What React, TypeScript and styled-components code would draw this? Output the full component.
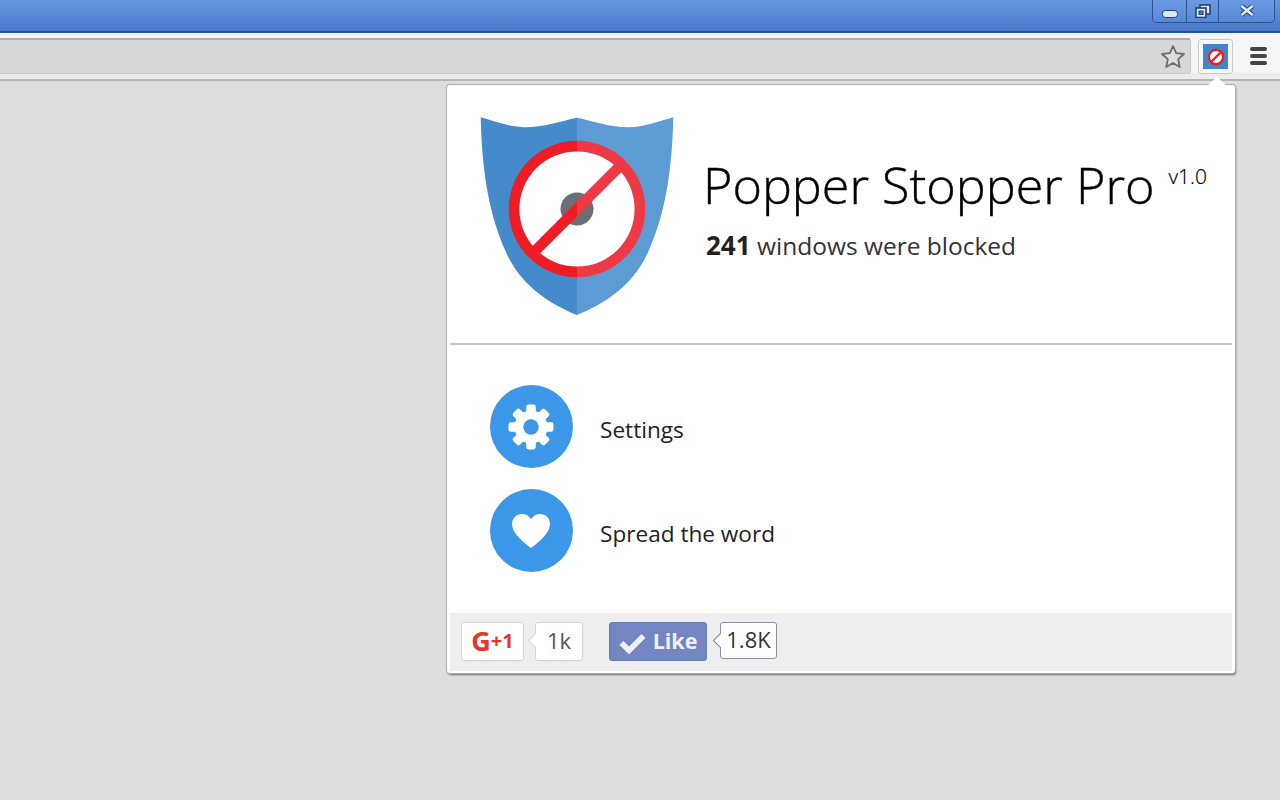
import React from 'react';
import styled, { createGlobalStyle } from 'styled-components';

const GlobalStyle = createGlobalStyle`
  html, body {
    margin: 0;
    padding: 0;
    background: #dedede;
    overflow: hidden;
  }
  body {
    font-family: 'Open Sans', sans-serif;
  }
`;

function ShieldLogo() {
  return (
    <svg width="200" height="204" viewBox="478 114 200 204">
      <path
        d="M480.7 117.3C497 122 511 127.3 525 127.3C544 127.3 561 121 577 117.7V315C548 303 520 285 505 250C490 216 482 175 480.7 117.3Z"
        fill="#458bcb"
      />
      <path
        d="M673.3 117.3C657 122 643 127.3 629 127.3C610 127.3 593 121 577 117.7V315C606 303 634 285 649 250C664 216 672 175 673.3 117.3Z"
        fill="#5c9bd4"
      />
      <circle cx="577" cy="209" r="63" fill="#fff" />
      <circle cx="577" cy="209" r="16.5" fill="#687073" />
      <path d="M577 140.7A68.3 68.3 0 0 0 577 277.3V266.6A57.6 57.6 0 0 1 577 151.4Z" fill="#ee1c25" />
      <path d="M577 140.7A68.3 68.3 0 0 1 577 277.3V266.6A57.6 57.6 0 0 0 577 151.4Z" fill="#ef3a45" />
      <path d="M577 201.5L533 245.5L533 260.5L577 216.5Z" fill="#ee1c25" />
      <path d="M577 201.5L621 157.5L621 172.5L577 216.5Z" fill="#ef3a45" />
    </svg>
  );
}

function BanIcon() {
  return (
    <svg width="18" height="18" viewBox="0 0 18 18">
      <circle cx="9" cy="9" r="7.2" fill="#fff" stroke="#ee1c25" strokeWidth="2.4" />
      <path d="M4.5 13.5L13.5 4.5" stroke="#ee1c25" strokeWidth="2.4" />
    </svg>
  );
}

function GearIcon() {
  const teeth = [0, 45, 90, 135, 180, 225, 270, 315];
  return (
    <svg width="46" height="46" viewBox="-23 -23 46 46">
      {teeth.map((a) => (
        <rect key={a} x="-4.8" y="-22.5" width="9.6" height="12" rx="2.4" fill="#fff" transform={`rotate(${a})`} />
      ))}
      <circle r="16.5" fill="#fff" />
      <circle r="7.7" fill="#3d97e8" />
    </svg>
  );
}

function HeartIcon() {
  return (
    <svg width="40" height="36" viewBox="0 0 42 38">
      <path
        d="M21 37C14 31 1 22 1 11.5C1 5 6 1 11.5 1C15.5 1 19 3 21 6.5C23 3 26.5 1 30.5 1C36 1 41 5 41 11.5C41 22 28 31 21 37Z"
        fill="#fff"
      />
    </svg>
  );
}

function StarIcon() {
  return (
    <svg width="26" height="25" viewBox="0 0 26 25">
      <path
        d="M13 2L16.2 9.2L24 10L18.2 15.2L19.8 23L13 19L6.2 23L7.8 15.2L2 10L9.8 9.2Z"
        fill="#dedede"
        stroke="#6f6f6f"
        strokeWidth="1.8"
        strokeLinejoin="round"
      />
    </svg>
  );
}

export default function App() {
  return (
    <Page>
      <GlobalStyle />
      <TitleBar>
        <WindowControls>
          <MinButton>
            <svg width="16" height="8" viewBox="0 0 16 8">
              <rect x="0.5" y="0.5" width="15" height="7" rx="3" fill="#dfe8f5" stroke="#23406f" />
            </svg>
          </MinButton>
          <RestoreButton>
            <svg width="16" height="14" viewBox="0 0 16 14">
              <rect x="5" y="1" width="10" height="9" fill="#dfe8f5" stroke="#23406f" strokeWidth="1.6" />
              <rect x="1" y="4" width="10" height="9.5" fill="#dfe8f5" stroke="#23406f" strokeWidth="1.6" />
              <rect x="4" y="7" width="4" height="3.5" fill="#4b79c4" stroke="#23406f" />
            </svg>
          </RestoreButton>
          <CloseButton>
            <svg width="16" height="13" viewBox="0 0 16 13">
              <path d="M2.5 2L13.5 11M13.5 2L2.5 11" stroke="#23406f" strokeWidth="4.6" />
              <path d="M2.5 2L13.5 11M13.5 2L2.5 11" stroke="#e6edf8" strokeWidth="2.6" />
            </svg>
          </CloseButton>
        </WindowControls>
      </TitleBar>
      <Toolbar>
        <Omnibox>
          <StarIcon />
        </Omnibox>
        <ExtensionButton>
          <ExtensionIcon>
            <BanIcon />
          </ExtensionIcon>
        </ExtensionButton>
        <MenuButton>
          <MenuBar />
          <MenuBar />
          <MenuBar />
        </MenuButton>
      </Toolbar>
      <ToolbarEdge />
      <Popup>
        <Caret />
        <Header>
          <ShieldLogo />
          <HeaderText>
            <TitleRow>
              <Title>Popper Stopper Pro</Title>
              <Version>v1.0</Version>
            </TitleRow>
            <Blocked>
              <b>241</b> windows were blocked
            </Blocked>
          </HeaderText>
        </Header>
        <Divider />
        <Menu>
          <MenuRow>
            <RoundIcon>
              <GearIcon />
            </RoundIcon>
            <MenuLabel>Settings</MenuLabel>
          </MenuRow>
          <MenuRow>
            <RoundIcon>
              <HeartIcon />
            </RoundIcon>
            <MenuLabel>Spread the word</MenuLabel>
          </MenuRow>
        </Menu>
        <Footer>
          <PlusButton>
            <PlusG>G</PlusG>
            <PlusOne>+1</PlusOne>
          </PlusButton>
          <CountBubble>1k</CountBubble>
          <LikeButton>
            <LikeCheck width="27" height="22" viewBox="0 0 27 22">
              <path d="M2.5 11L10 18.5L24.5 4" fill="none" stroke="#eef0f8" strokeWidth="5.5" />
            </LikeCheck>
            <span>Like</span>
          </LikeButton>
          <LikeCount>1.8K</LikeCount>
        </Footer>
      </Popup>
    </Page>
  );
}

const Page = styled.div`
  position: relative;
  width: 1280px;
  height: 800px;
  background: #dedede;
  overflow: hidden;
`;

const TitleBar = styled.div`
  height: 31px;
  display: flex;
  justify-content: flex-end;
  padding-right: 5px;
  background: linear-gradient(#6496e0, #4a79c9);
  border-bottom: 2px solid #23509f;
`;

const WindowControls = styled.div`
  display: flex;
  height: 22px;
  border: 1px solid #2c528f;
  border-top: none;
  border-radius: 0 0 5px 5px;
  overflow: hidden;
`;

const ControlButton = styled.div`
  display: flex;
  justify-content: center;
  background: linear-gradient(#6a9be2, #5688d6);
`;

const MinButton = styled(ControlButton)`
  width: 34px;
  padding-top: 10px;
  box-sizing: border-box;
  border-right: 1px solid #2c528f;
`;

const RestoreButton = styled(ControlButton)`
  width: 32px;
  padding-top: 4px;
  box-sizing: border-box;
  border-right: 1px solid #2c528f;
`;

const CloseButton = styled(ControlButton)`
  width: 55px;
  padding-top: 4px;
  box-sizing: border-box;
`;

const Toolbar = styled.div`
  height: 35px;
  padding-top: 5px;
  display: flex;
  align-items: flex-start;
  background: #f5f5f5;
`;

const Omnibox = styled.div`
  width: 1191px;
  height: 36px;
  display: flex;
  align-items: center;
  justify-content: flex-end;
  padding-right: 4px;
  box-sizing: border-box;
  background: #d8d8d8;
  border-top: 2px solid #b0b0b0;
  border-right: 1px solid #c8c8c8;
  border-bottom: 1px solid #c8c8c8;
  border-radius: 0 3px 3px 0;
`;

const ExtensionButton = styled.div`
  width: 35px;
  height: 35px;
  margin: 1px 0 0 7px;
  box-sizing: border-box;
  display: flex;
  align-items: center;
  justify-content: center;
  background: #f8f8f8;
  border: 1px solid #c9c9c9;
  border-radius: 3px;
`;

const ExtensionIcon = styled.div`
  width: 25px;
  height: 25px;
  display: flex;
  align-items: center;
  justify-content: center;
  background: #3f86cc;
`;

const MenuButton = styled.div`
  display: flex;
  flex-direction: column;
  gap: 3px;
  margin: 9px 0 0 17px;
`;

const MenuBar = styled.div`
  width: 17px;
  height: 4px;
  border-radius: 2px;
  background: #444;
`;

const ToolbarEdge = styled.div`
  height: 6px;
  background: #ececec;
  border-bottom: 2px solid #b4b6b8;
`;

const Popup = styled.div`
  position: absolute;
  left: 447px;
  top: 85px;
  width: 788px;
  height: 588px;
  box-sizing: border-box;
  padding: 0 3px 2px;
  display: flex;
  flex-direction: column;
  background: #fff;
  border-radius: 3px;
  box-shadow: 0 0 0 1px #adadad, 1px 2px 2px #666;
`;

const Caret = styled.div`
  position: absolute;
  left: 764px;
  top: -6px;
  width: 12px;
  height: 12px;
  background: #fff;
  transform: rotate(45deg);
`;

const Header = styled.div`
  height: 258px;
  display: flex;
  padding: 29px 0 0 28px;
  box-sizing: border-box;
  position: relative;
`;

const HeaderText = styled.div`
  margin: 37px 0 0 25px;
`;

const TitleRow = styled.div`
  display: flex;
  align-items: flex-start;
`;

const Title = styled.div`
  font-size: 50.3px;
  font-weight: 300;
  line-height: 68px;
  color: #000;
  -webkit-text-stroke: 0.4px #000;
`;

const Version = styled.div`
  margin: 11px 0 0 14px;
  font-size: 21px;
  font-weight: 300;
  line-height: 28px;
  color: #000;
  -webkit-text-stroke: 0.2px #000;
`;

const Blocked = styled.div`
  margin: 9px 0 0 3px;
  font-size: 24.5px;
  line-height: 34px;
  color: #333;

  b {
    font-size: 26px;
    font-weight: 700;
    color: #222;
  }
`;

const Divider = styled.div`
  height: 2px;
  background: #c8c8c8;
`;

const Menu = styled.div`
  flex: 1;
  display: flex;
  flex-direction: column;
  gap: 21px;
  padding: 40px 0 0 39.5px;
`;

const MenuRow = styled.div`
  display: flex;
  align-items: center;
  gap: 27.5px;
`;

const RoundIcon = styled.div`
  width: 83px;
  height: 83px;
  border-radius: 50%;
  display: flex;
  align-items: center;
  justify-content: center;
  background: #3d97e8;
`;

const MenuLabel = styled.div`
  margin-top: 6px;
  font-size: 22.6px;
  line-height: 30px;
  color: #222;
`;

const Footer = styled.div`
  height: 58px;
  display: flex;
  align-items: flex-start;
  padding: 9px 0 0 11px;
  box-sizing: border-box;
  background: #eeeeee;
`;

const PlusButton = styled.div`
  width: 63px;
  height: 39px;
  padding-bottom: 2px;
  box-sizing: border-box;
  display: flex;
  align-items: center;
  justify-content: center;
  background: #fff;
  border: 1px solid #d4d4d4;
  border-radius: 3px;
  color: #dc3a2c;
  font-weight: 700;
`;

const PlusG = styled.span`
  font-size: 27px;
  line-height: 30px;
`;

const PlusOne = styled.span`
  font-size: 20px;
  line-height: 30px;
`;

const Bubble = styled.div`
  position: relative;
  height: 39px;
  padding-bottom: 3px;
  box-sizing: border-box;
  display: flex;
  align-items: center;
  justify-content: center;
  background: #fff;
  border-radius: 3px;
  font-size: 22px;

  &::before {
    content: '';
    position: absolute;
    left: -6px;
    top: 12px;
    width: 10px;
    height: 10px;
    background: #fff;
    transform: rotate(45deg);
    border-left: 1px solid var(--edge);
    border-bottom: 1px solid var(--edge);
  }
`;

const CountBubble = styled(Bubble)`
  --edge: #d4d4d4;
  width: 48px;
  margin-left: 11px;
  border: 1px solid #d4d4d4;
  color: #555;
`;

const LikeButton = styled.div`
  width: 98px;
  height: 39px;
  margin-left: 26px;
  padding-bottom: 3px;
  box-sizing: border-box;
  display: flex;
  align-items: center;
  justify-content: center;
  gap: 7px;
  background: #7486c2;
  border: 1px solid #6a7db9;
  border-radius: 3px;
  color: #eef0f8;
  font-size: 21.5px;
  font-weight: 700;
`;

const LikeCheck = styled.svg`
  margin-top: 6px;
`;

const LikeCount = styled(Bubble)`
  --edge: #77808f;
  width: 57px;
  height: 37px;
  margin-left: 13px;
  border: 1px solid #8a90a0;
  color: #333;
`;
